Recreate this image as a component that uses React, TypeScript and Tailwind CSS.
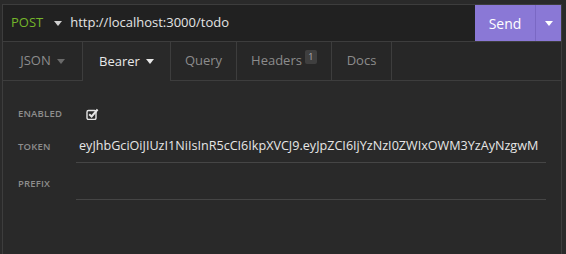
import React from "react";

function Caret({ className = "" }: { className?: string }) {
  return (
    <svg width="8" height="5" viewBox="0 0 8 5" className={className}>
      <path d="M0 0 H8 L4 5 Z" fill="currentColor" />
    </svg>
  );
}

function CheckIcon() {
  return (
    <svg width="13" height="12" viewBox="0 0 13 12" className="text-[#e6e6e6]">
      <rect x="1" y="2.5" width="9" height="9" rx="1.5" fill="none" stroke="currentColor" strokeWidth="1.4" />
      <path d="M3.2 6.2 L5.6 8.5 L11.6 1.5" fill="none" stroke="currentColor" strokeWidth="2" />
    </svg>
  );
}

const tabs = [
  { label: "JSON", w: "w-[80px]", caret: true },
  { label: "Bearer", w: "w-[88px]", caret: true, active: true },
  { label: "Query", w: "w-[66px]" },
  { label: "Headers", w: "w-[95px]", badge: "1" },
  { label: "Docs", w: "w-[60px]" },
];

export default function App() {
  return (
    <div
      className="w-[566px] h-[254px] bg-[#2a2a2a] pt-[4px] pl-[2px] pr-[4px] overflow-hidden"
      style={{ fontFamily: '"Open Sans", "Noto Sans", sans-serif' }}
    >
      <div className="h-full flex flex-col border-t border-l border-r border-[#3d3d3d] bg-[#292929]">
        {/* url bar */}
        <div className="h-[37px] flex border-b border-[#3d3d3d] bg-[#212121]">
          <div className="flex items-center pl-[8px] gap-[11px] flex-1">
            <span className="text-[13px] text-[#74b62a]">POST</span>
            <Caret className="text-[#d0d0d0]" />
            <span className="text-[13px] text-[#e4e4e4] -ml-[3px]">http://localhost:3000/todo</span>
          </div>
          <button className="w-[61px] bg-[#8a78d6] text-white text-[14px] border-r border-[#7a68c4]">
            Send
          </button>
          <div className="w-[25px] bg-[#8a78d6] flex items-center justify-center text-white">
            <Caret />
          </div>
        </div>

        {/* tabs */}
        <div className="h-[39px] flex bg-[#272727]">
          {tabs.map((t) => (
            <div
              key={t.label}
              className={
                t.active
                  ? `${t.w} flex items-center justify-center gap-[6px] border-r border-[#3d3d3d] bg-[#292929] text-[#e8e8e8] text-[13px]`
                  : `${t.w} flex items-center justify-center gap-[6px] border-r border-b border-[#3d3d3d] text-[#8c8c8c] text-[13px]`
              }
            >
              <span>{t.label}</span>
              {t.caret && <Caret className={t.active ? "text-[#e8e8e8]" : "text-[#6a6a6a]"} />}
              {t.badge && (
                <span className="-ml-[3px] mb-[9px] w-[12px] h-[14px] rounded-[2px] bg-[#3f3f3f] text-[#b0b0b0] text-[9px] flex items-center justify-center">
                  {t.badge}
                </span>
              )}
            </div>
          ))}
          <div className="flex-1 border-b border-[#3d3d3d]" />
        </div>

        {/* bearer form */}
        <div className="flex-1 pl-[15px] pr-[15px] pt-[23px]">
          <div className="grid grid-cols-[58px_1fr] items-center">
            <span className="text-[9.5px] font-semibold tracking-[0.02em] text-[#8d8d8d]">ENABLED</span>
            <div className="h-[20px] flex items-center pl-[10px]">
              <CheckIcon />
            </div>

            <span className="text-[9.5px] font-semibold tracking-[0.02em] text-[#8d8d8d] mt-[8px]">TOKEN</span>
            <div className="mt-[6px] h-[33px] border-b border-[#454545] flex items-center pl-[3px] whitespace-nowrap text-[12.6px] text-[#e6e6e6]">
              eyJhbGciOiJIUzI1NiIsInR5cCI6IkpXVCJ9.eyJpZCI6IjYzNzI0ZWIxOWM3YzAyNzgwM
            </div>

            <span className="text-[9.5px] font-semibold tracking-[0.02em] text-[#8d8d8d] mt-[6px]">PREFIX</span>
            <div className="h-[37px] border-b border-[#454545]" />
          </div>
        </div>
      </div>
    </div>
  );
}
